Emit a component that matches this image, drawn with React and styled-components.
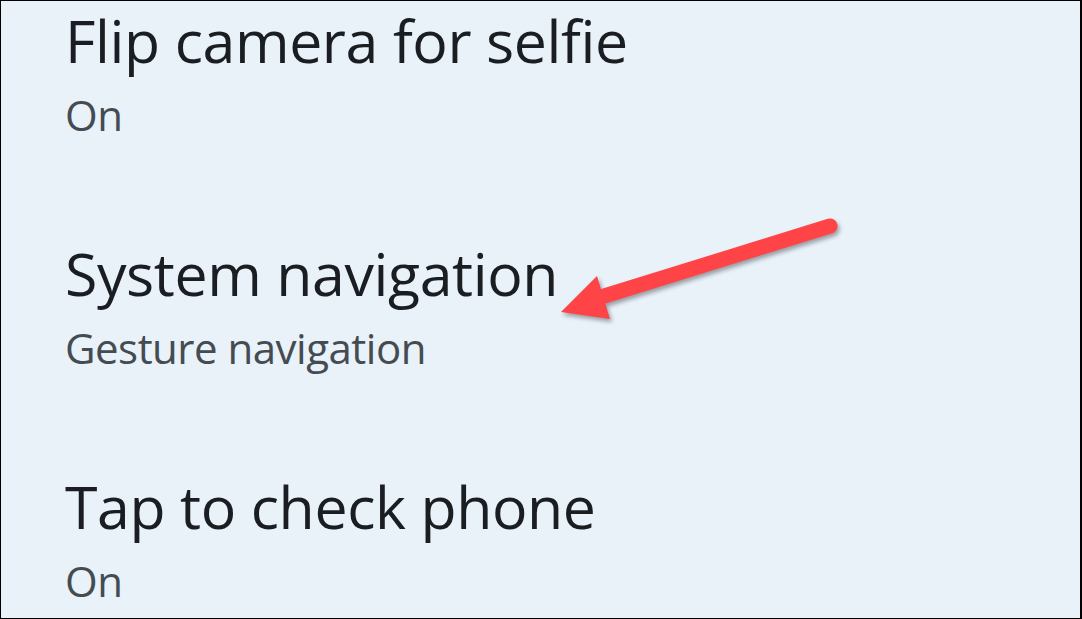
import React from "react";
import styled, { createGlobalStyle } from "styled-components";

const GlobalStyle = createGlobalStyle`
  html, body {
    margin: 0;
    padding: 0;
    background: #ffffff;
  }
  * {
    box-sizing: border-box;
  }
`;

const Frame = styled.div`
  position: relative;
  width: 1082px;
  height: 619px;
  overflow: hidden;
  background: #e9f1f9;
  border: 1px solid #000;
  border-right-width: 2px;
  padding: 4px 0 0 64px;
  font-family: "Open Sans", "Liberation Sans", sans-serif;
  display: flex;
  flex-direction: column;
  gap: 98px;
`;

const Item = styled.div`
  display: flex;
  flex-direction: column;
  gap: 15px;
`;

const Title = styled.div`
  font-size: 59px;
  line-height: 70px;
  letter-spacing: -0.4px;
  color: #1a1d21;
  white-space: nowrap;
`;

const Summary = styled.div`
  font-size: 42px;
  line-height: 50px;
  letter-spacing: -0.5px;
  color: #444c52;
  white-space: nowrap;
`;

const Arrow = styled.svg`
  position: absolute;
  left: 0;
  top: 0;
  width: 1082px;
  height: 619px;
  pointer-events: none;
  filter: drop-shadow(2px 3px 2px rgba(0, 0, 0, 0.35));
`;

const settings = [
  { title: "Flip camera for selfie", summary: "On" },
  { title: "System navigation", summary: "Gesture navigation" },
  { title: "Tap to check phone", summary: "On" },
];

export default function App() {
  return (
    <>
      <GlobalStyle />
      <Frame>
        {settings.map((s) => (
          <Item key={s.title}>
            <Title>{s.title}</Title>
            <Summary>{s.summary}</Summary>
          </Item>
        ))}
        <Arrow viewBox="0 0 1082 619">
          <line
            x1="829"
            y1="225"
            x2="600"
            y2="296"
            stroke="#ff4447"
            strokeWidth="15"
            strokeLinecap="round"
          />
          <polygon points="560,311 596,275 609,318" fill="#ff4447" />
        </Arrow>
      </Frame>
    </>
  );
}
